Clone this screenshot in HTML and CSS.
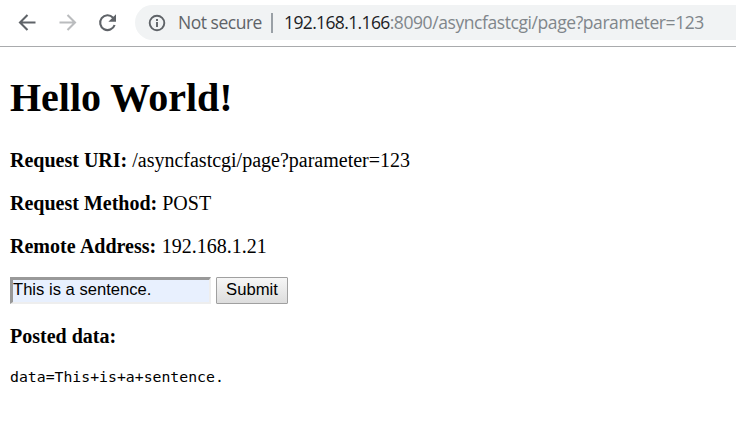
FILE: index.html
```
<!DOCTYPE html>
<html lang="en">
<head>
<meta charset="utf-8">
<title>Hello World!</title>
<link rel="stylesheet" href="styles.css">
</head>
<body>
<header class="toolbar">
  <svg class="icon" viewBox="0 0 24 24"><path d="M20.500 11.500H5.500M12.500 4 5 11.500l7.500 7.500"/></svg>
  <svg class="icon icon-disabled" viewBox="0 0 24 24"><path d="M4.500 11.500h15M12.500 4l7.500 7.500-7.500 7.500"/></svg>
  <svg class="icon" viewBox="0 0 24 24"><path d="M18 6.700A7.400 7.400 0 1 0 19.600 14"/><path class="solid" d="M21 3.200v7.600h-7.600z"/></svg>
  <div class="omnibox">
    <svg class="info" viewBox="0 0 18 18"><circle cx="9" cy="9" r="7.300"/><path d="M9 8v5M9 5v2"/></svg>
    <span class="security">Not secure</span>
    <span class="divider"></span>
    <span class="url"><span class="host">192.168.1.166</span><span class="path">:8090/asyncfastcgi/page?parameter=123</span></span>
  </div>
</header>
<main class="page">
  <h1>Hello World!</h1>
  <p><b>Request URI:</b> /asyncfastcgi/page?parameter=123</p>
  <p><b>Request Method:</b> POST</p>
  <p class="address"><b>Remote Address:</b> 192.168.1.21</p>
  <form class="form">
    <input class="field" type="text" value="This is a sentence.">
    <button class="submit" type="button">Submit</button>
  </form>
  <p><b>Posted data:</b></p>
  <pre>data=This+is+a+sentence.</pre>
</main>
</body>
</html>
```
FILE: styles.css
```
* { box-sizing: border-box; }
body {
  margin: 0;
  height: 443px;
  overflow: hidden;
  background: #fff;
  color: #000;
  font: 20px/23px "Liberation Serif", "Times New Roman", serif;
}
.toolbar {
  display: flex;
  align-items: center;
  gap: 16px;
  height: 47px;
  padding: 0 0 1px 15px;
  border-bottom: 1px solid #a9abad;
}
.icon {
  flex: none;
  width: 24px;
  height: 24px;
  fill: none;
  stroke: #5f6368;
  stroke-width: 2.1;
}
.icon-disabled { stroke: #babcbe; }
.icon .solid { fill: #5f6368; stroke: none; }
.omnibox {
  display: flex;
  align-items: center;
  flex: 1;
  height: 35px;
  padding-left: 13px;
  border-radius: 18px 0 0 18px;
  background: #f1f3f4;
  font: 17.5px/24px "Open Sans", sans-serif;
  white-space: nowrap;
}
.info {
  flex: none;
  width: 18px;
  height: 18px;
  fill: none;
  stroke: #5f6368;
  stroke-width: 1.9;
}
.security { width: 93px; margin-left: 12px; color: #5f6368; letter-spacing: -0.48px; }
.divider { width: 2px; height: 20px; background: #9aa0a6; }
.url { margin: -1px 0 0 11px; }
.security { margin-top: -1px; }
.host { color: #202124; letter-spacing: -0.63px; }
.path { color: #80868b; letter-spacing: -0.42px; }
.page { padding: 27px 10px 0; }
h1 { margin: 0 0 28px; font-size: 40px; line-height: 47px; }
p { margin: 0 0 20px; }
.address { word-spacing: 0.5px; }
.form {
  display: flex;
  gap: 5px;
  margin: -1px 0 21px;
}
.field {
  width: 201px;
  height: 27px;
  padding: 0 0 2px;
  border: solid;
  border-width: 3px 2px 2px 3px;
  border-color: #999 #eee #eee #999;
  background: #e8f0fe;
  font: 16.6px "Liberation Sans", Arial, sans-serif;
}
.submit {
  width: 72px;
  height: 27px;
  padding: 0 0 2px;
  border: 1px solid #a0a0a0;
  border-radius: 1px;
  background: linear-gradient(#f6f6f6, #ddd);
  color: #000;
  font: 16.67px "Liberation Sans", Arial, sans-serif;
}
pre { margin: -1px 0 0; font: 14.8px/19px "DejaVu Sans Mono", monospace; }
```
